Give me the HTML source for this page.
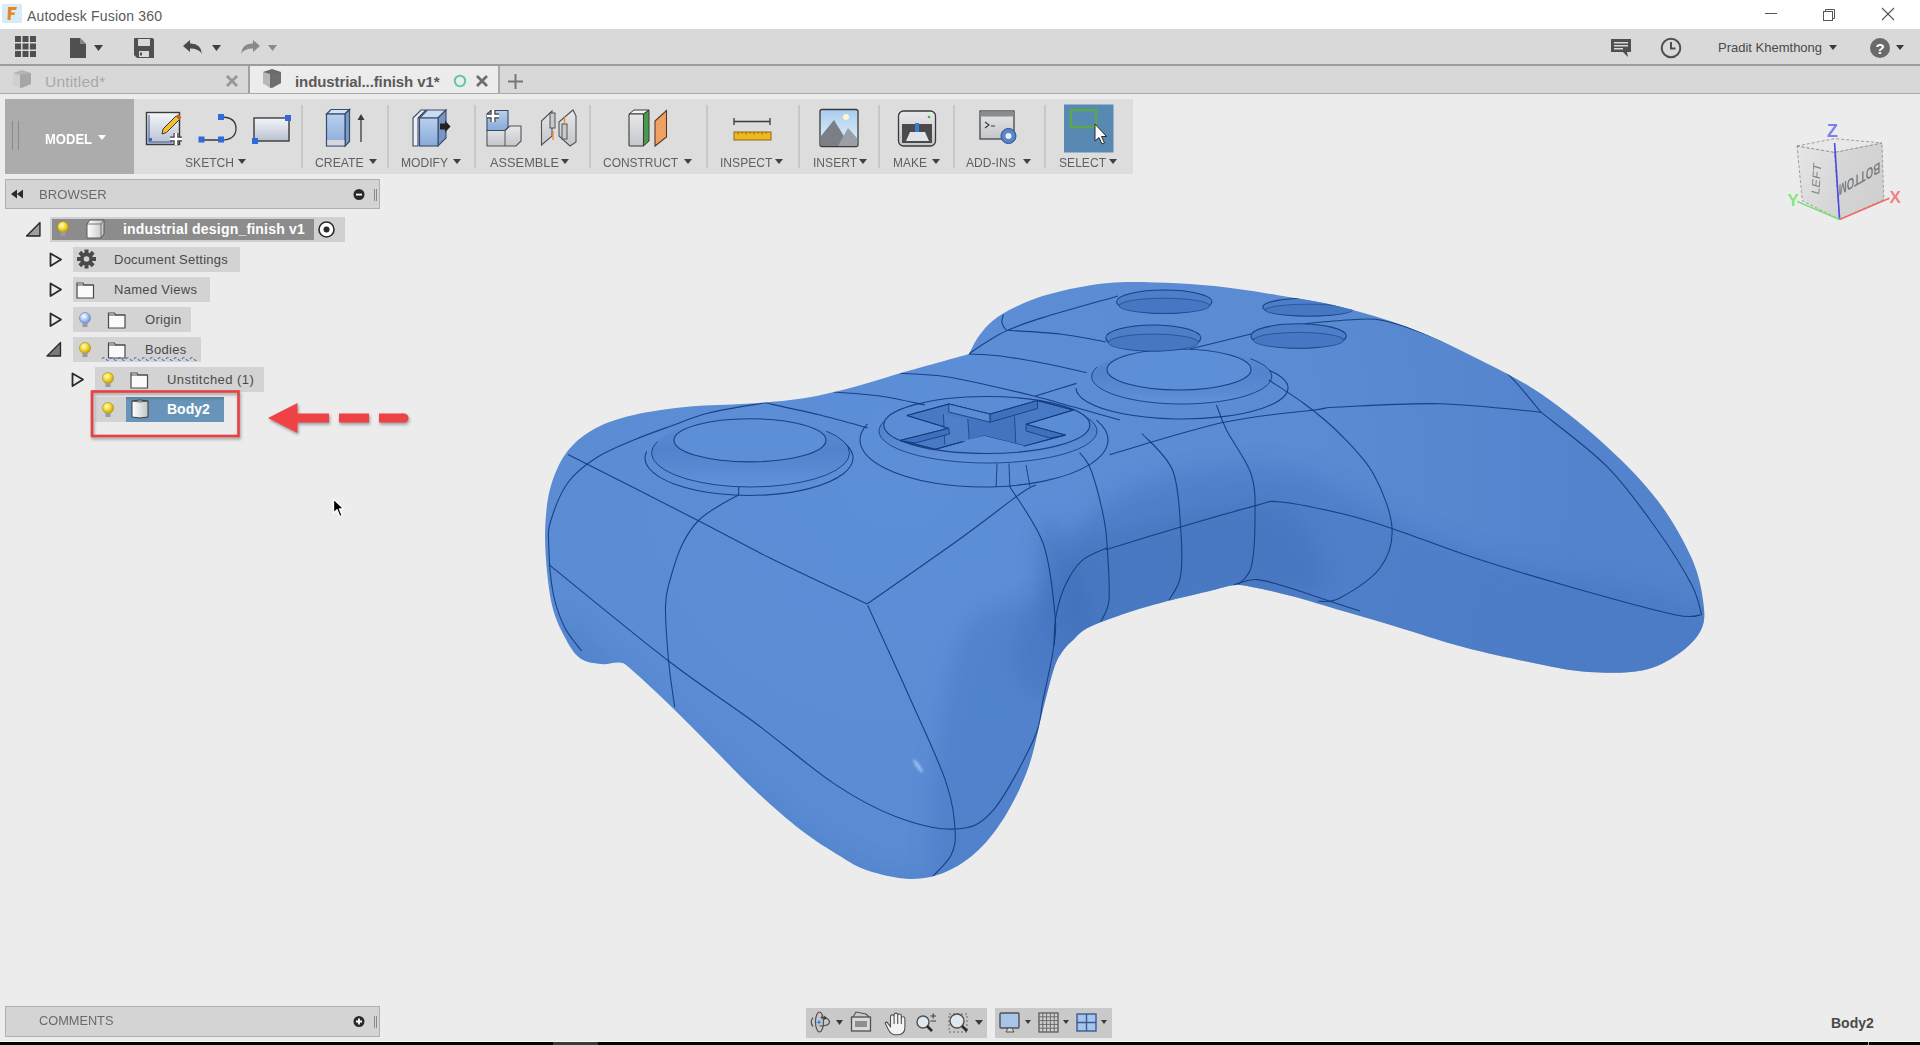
<!DOCTYPE html>
<html><head><meta charset="utf-8">
<style>
*{margin:0;padding:0;box-sizing:border-box}
html,body{width:1920px;height:1045px;overflow:hidden;background:#ececec;font-family:"Liberation Sans",sans-serif;position:relative}
.a{position:absolute}
.t{position:absolute;white-space:nowrap;line-height:1}
.lbl{position:absolute;white-space:nowrap;line-height:1;font-size:13px;color:#606060;transform-origin:0 0}
.tri{position:absolute;width:0;height:0;border-left:4px solid transparent;border-right:4px solid transparent;border-top:5px solid #404040}
.row{position:absolute;height:25px;background:#d3d3d3}
.rt{position:absolute;white-space:nowrap;line-height:1;font-size:13px;color:#4a4a4a;top:6px;letter-spacing:0.3px}
</style></head><body>
<!-- ===== title bar ===== -->
<div class="a" style="left:0;top:0;width:1920px;height:29px;background:#fff"></div>
<svg class="a" style="left:2px;top:4px" width="22" height="20" viewBox="0 0 22 20">
<rect x="0" y="0" width="20" height="19" fill="#d8ecf8"/>
<path d="M6 3 L15 3 L14 6 L9.5 6 L9.3 8.5 L13 8.5 L12.5 11 L9 11 L8.5 16 L5.5 16 Z" fill="#e8862a"/>
</svg>
<div class="t" style="left:27px;top:8.5px;font-size:14px;color:#5a5a5a;letter-spacing:0.2px">Autodesk Fusion 360</div>
<div class="a" style="left:1765px;top:13px;width:12px;height:1px;background:#555"></div>
<svg class="a" style="left:1820px;top:6px" width="16" height="16" viewBox="0 0 16 16">
<rect x="3.5" y="5.5" width="9" height="9" fill="none" stroke="#555" stroke-width="1"/>
<path d="M5.5 5.5 V3.5 H14.5 V12.5 H12.5" fill="none" stroke="#555" stroke-width="1"/>
</svg>
<svg class="a" style="left:1881px;top:7px" width="14" height="14" viewBox="0 0 14 14">
<path d="M1 1 L13 13 M13 1 L1 13" stroke="#555" stroke-width="1.1"/>
</svg>
<!-- ===== toolbar ===== -->
<div class="a" style="left:0;top:29px;width:1920px;height:35px;background:#d9d9d9"></div>
<div class="a" style="left:0;top:64px;width:1920px;height:2px;background:#9c9c9c"></div>
<svg class="a" style="left:14px;top:35px" width="24" height="24" viewBox="0 0 24 24" fill="#4f4f4f">
<rect x="1" y="1" width="6" height="6"/><rect x="8.5" y="1" width="6" height="6"/><rect x="16" y="1" width="6" height="6"/>
<rect x="1" y="8.5" width="6" height="6"/><rect x="8.5" y="8.5" width="6" height="6"/><rect x="16" y="8.5" width="6" height="6"/>
<rect x="1" y="16" width="6" height="6"/><rect x="8.5" y="16" width="6" height="6"/><rect x="16" y="16" width="6" height="6"/>
</svg>
<svg class="a" style="left:68px;top:36px" width="40" height="24" viewBox="0 0 40 24">
<path d="M2 2 H12 L18 8 V22 H2 Z" fill="#505050"/><path d="M12 2 V8 H18" fill="#888"/>
<path d="M26 9 H35 L30.5 15 Z" fill="#404040"/>
</svg>
<svg class="a" style="left:132px;top:36px" width="24" height="24" viewBox="0 0 24 24">
<path d="M2 3 Q2 2 3 2 H20 Q22 2 22 4 V22 H5 L2 19 Z" fill="#505050"/>
<rect x="6" y="3" width="12" height="7" fill="#d9d9d9"/>
<rect x="7" y="15" width="10" height="6" fill="#d9d9d9"/><rect x="8" y="16.5" width="2" height="3" fill="#505050"/>
</svg>
<svg class="a" style="left:181px;top:38px" width="46" height="20" viewBox="0 0 46 20">
<path d="M2 8 L9 2 V5.5 Q20 5 21 16 Q18 10.5 9 10.5 V14 Z" fill="#4a4a4a"/>
<path d="M31 7 H40 L35.5 13 Z" fill="#404040"/>
</svg>
<svg class="a" style="left:238px;top:38px" width="46" height="20" viewBox="0 0 46 20">
<path d="M22 8 L15 2 V5.5 Q4 5 3 16 Q6 10.5 15 10.5 V14 Z" fill="#8a8a8a"/>
<path d="M30 7 H39 L34.5 13 Z" fill="#8a8a8a"/>
</svg>
<!-- right toolbar -->
<svg class="a" style="left:1610px;top:38px" width="24" height="20" viewBox="0 0 24 20">
<path d="M1 1 H21 V14 H17 L18 19 L13 14 H1 Z" fill="#4f4f4f"/>
<rect x="4" y="4" width="14" height="1.5" fill="#d9d9d9"/><rect x="4" y="7" width="14" height="1.5" fill="#d9d9d9"/><rect x="4" y="10" width="9" height="1.5" fill="#d9d9d9"/>
</svg>
<svg class="a" style="left:1660px;top:37px" width="22" height="22" viewBox="0 0 22 22">
<circle cx="11" cy="11" r="9.3" fill="none" stroke="#4f4f4f" stroke-width="2"/>
<path d="M11 5 V11.5 H15.5" fill="none" stroke="#4f4f4f" stroke-width="2"/>
</svg>
<div class="t" style="left:1718px;top:41px;font-size:13px;color:#4a4a4a">Pradit Khemthong</div>
<div class="tri" style="left:1829px;top:45px;border-top-color:#3a3a3a"></div>
<svg class="a" style="left:1869px;top:37px" width="22" height="22" viewBox="0 0 22 22">
<circle cx="11" cy="11" r="10" fill="#6a6a6a"/>
<text x="11" y="16.5" font-family="Liberation Sans" font-weight="bold" font-size="15" fill="#fff" text-anchor="middle">?</text>
</svg>
<div class="tri" style="left:1896px;top:45px;border-top-color:#3a3a3a"></div>
<!-- ===== tab row ===== -->
<div class="a" style="left:0;top:66px;width:1920px;height:27px;background:#d8d8d8"></div>
<div class="a" style="left:0;top:93px;width:1920px;height:1px;background:#a8a8a8"></div>
<div class="a" style="left:248px;top:66px;width:2px;height:27px;background:#a0a0a0"></div>
<div class="a" style="left:250px;top:66px;width:248px;height:27px;background:#ececec"></div>
<div class="a" style="left:498px;top:66px;width:2px;height:27px;background:#a8a8a8"></div>
<svg class="a" style="left:11px;top:69px" width="22" height="20" viewBox="0 0 22 20">
<path d="M2 4 L11 1 L20 4 V15 L11 19 L2 15 Z" fill="#b4b4b4"/>
<path d="M2 4 L9 6 V19 L2 15 Z" fill="#d0d0d0"/><path d="M9 6 L20 4 V15 L9 19 Z" fill="#a6a6a6"/>
</svg>
<div class="t" style="left:45px;top:74px;font-size:15.5px;color:#a8a8a8;letter-spacing:0.2px">Untitled*</div>
<svg class="a" style="left:225px;top:74px" width="14" height="14" viewBox="0 0 14 14">
<path d="M2 2 L12 12 M12 2 L2 12" stroke="#969696" stroke-width="2.8"/>
</svg>
<svg class="a" style="left:261px;top:68px" width="22" height="21" viewBox="0 0 22 21">
<path d="M2 4 L11 1 L20 4 V15 L11 20 L2 15 Z" fill="#6a6a6a"/>
<path d="M2 4 L9 6 V20 L2 15 Z" fill="#b8b8b8"/><path d="M9 6 L20 4 V15 L9 20 Z" fill="#6e6e6e"/>
</svg>
<div class="t" style="left:295px;top:74px;font-size:15px;font-weight:bold;color:#5a5a5a;letter-spacing:-0.1px">industrial...finish v1*</div>
<svg class="a" style="left:452px;top:73px" width="16" height="16" viewBox="0 0 16 16">
<circle cx="8" cy="8" r="5.2" fill="none" stroke="#60c8a8" stroke-width="2"/>
</svg>
<svg class="a" style="left:475px;top:74px" width="14" height="14" viewBox="0 0 14 14">
<path d="M2 2 L12 12 M12 2 L2 12" stroke="#6e6e6e" stroke-width="2.8"/>
</svg>
<svg class="a" style="left:507px;top:73px" width="17" height="17" viewBox="0 0 17 17">
<path d="M8.5 1 V16 M1 8.5 H16" stroke="#777" stroke-width="2"/>
</svg>
<!-- ===== ribbon ===== -->
<div class="a" style="left:5px;top:99px;width:1128px;height:75px;background:#dddddd"></div>
<div class="a" style="left:5px;top:99px;width:129px;height:75px;background:#acacac"></div>
<div class="a" style="left:12px;top:121px;width:1px;height:29px;background:#8a8a8a"></div>
<div class="a" style="left:18px;top:121px;width:1px;height:29px;background:#8a8a8a"></div>
<div class="t" style="left:45px;top:132px;font-size:14px;font-weight:bold;color:#fff;transform:scaleX(0.93);transform-origin:0 0">MODEL</div>
<div class="tri" style="left:98px;top:135px;border-top-color:#fff;border-left-width:4px;border-right-width:4px;border-top-width:5px"></div>
<!-- separators -->
<div class="a" style="left:301px;top:105px;width:2px;height:63px;background:#c8c8c8"></div>
<div class="a" style="left:387px;top:105px;width:2px;height:63px;background:#c8c8c8"></div>
<div class="a" style="left:474px;top:105px;width:2px;height:63px;background:#c8c8c8"></div>
<div class="a" style="left:589px;top:105px;width:2px;height:63px;background:#c8c8c8"></div>
<div class="a" style="left:706px;top:105px;width:2px;height:63px;background:#c8c8c8"></div>
<div class="a" style="left:798px;top:105px;width:2px;height:63px;background:#c8c8c8"></div>
<div class="a" style="left:878px;top:105px;width:2px;height:63px;background:#c8c8c8"></div>
<div class="a" style="left:953px;top:105px;width:2px;height:63px;background:#c8c8c8"></div>
<div class="a" style="left:1044px;top:105px;width:2px;height:63px;background:#c8c8c8"></div>
<!-- labels -->
<div class="lbl" style="left:185px;top:156px;transform:scaleX(0.93)">SKETCH</div><div class="tri" style="left:238px;top:159px"></div>
<div class="lbl" style="left:315px;top:156px;transform:scaleX(0.94)">CREATE</div><div class="tri" style="left:369px;top:159px"></div>
<div class="lbl" style="left:401px;top:156px;transform:scaleX(0.93)">MODIFY</div><div class="tri" style="left:453px;top:159px"></div>
<div class="lbl" style="left:490px;top:156px;transform:scaleX(0.985)">ASSEMBLE</div><div class="tri" style="left:561px;top:159px"></div>
<div class="lbl" style="left:603px;top:156px;transform:scaleX(0.92)">CONSTRUCT</div><div class="tri" style="left:684px;top:159px"></div>
<div class="lbl" style="left:720px;top:156px;transform:scaleX(0.93)">INSPECT</div><div class="tri" style="left:775px;top:159px"></div>
<div class="lbl" style="left:813px;top:156px;transform:scaleX(0.93)">INSERT</div><div class="tri" style="left:859px;top:159px"></div>
<div class="lbl" style="left:893px;top:156px;transform:scaleX(0.92)">MAKE</div><div class="tri" style="left:932px;top:159px"></div>
<div class="lbl" style="left:966px;top:156px;transform:scaleX(0.93)">ADD-INS</div><div class="tri" style="left:1023px;top:159px"></div>
<div class="lbl" style="left:1059px;top:156px;transform:scaleX(0.93)">SELECT</div><div class="tri" style="left:1109px;top:159px"></div>
<!-- icons -->
<svg class="a" style="left:0;top:95px" width="1140" height="60" viewBox="0 95 1140 60">
<defs>
<linearGradient id="gPaper" x1="0" y1="0" x2="0" y2="1"><stop offset="0" stop-color="#f4f6fa"/><stop offset="1" stop-color="#b8c0d0"/></linearGradient>
<linearGradient id="gBlue" x1="0" y1="0" x2="0" y2="1"><stop offset="0" stop-color="#b8d0ee"/><stop offset="1" stop-color="#88aad8"/></linearGradient>
<linearGradient id="gGray" x1="0" y1="0" x2="0" y2="1"><stop offset="0" stop-color="#e8e8ea"/><stop offset="1" stop-color="#c4c6ca"/></linearGradient>
<linearGradient id="gSky" x1="0" y1="0" x2="0" y2="1"><stop offset="0" stop-color="#a8cdf0"/><stop offset="1" stop-color="#e8f2fa"/></linearGradient>
</defs>
<!-- sketch -->
<rect x="146.5" y="112.5" width="33" height="32" fill="url(#gPaper)" stroke="#3a3a3a" stroke-width="1.4"/>
<path d="M149 115 V142 H172" fill="none" stroke="#3a5a9a" stroke-width="1"/>
<rect x="149" y="138" width="3" height="3" fill="#2e6bd8"/>
<path d="M163 129 L176 116 L179.5 119.5 L166.5 132.5 L162 134 Z" fill="#f0c030" stroke="#3a3a3a" stroke-width="1"/>
<path d="M176 116 L178 114 L181.5 117.5 L179.5 119.5Z" fill="#c07030"/>
<path d="M170 139 H182 M176 133 V145" stroke="#3a3a3a" stroke-width="5"/>
<path d="M170 139 H182 M176 133 V145" stroke="#fff" stroke-width="2.6"/>
<!-- line arc -->
<path d="M202 140 H221 M221 117 Q236 117 236 128.5 Q236 140 221 140" fill="none" stroke="#3a3a3a" stroke-width="1.3"/>
<rect x="198.5" y="136.5" width="6" height="6" fill="#2e6bd8"/><rect x="218" y="136.5" width="6" height="6" fill="#2e6bd8"/><rect x="218" y="114" width="6" height="6" fill="#2e6bd8"/>
<!-- rectangle -->
<rect x="254" y="118" width="35" height="23" fill="url(#gPaper)" stroke="#3a3a3a" stroke-width="1.4"/>
<rect x="252" y="138" width="6" height="6" fill="#2e6bd8"/><rect x="285" y="115" width="6" height="6" fill="#2e6bd8"/>
<!-- create -->
<path d="M326.5 114 L331 109.5 H349.5 L345 114 Z" fill="#d0e2f4" stroke="#3a4a6a" stroke-width="1.2"/>
<path d="M345 114 L349.5 109.5 V141.5 L345 146 Z" fill="#7c9cc8" stroke="#3a4a6a" stroke-width="1.2"/>
<rect x="326.5" y="114" width="18.5" height="32" fill="url(#gBlue)" stroke="#3a4a6a" stroke-width="1.2"/>
<rect x="327.2" y="140" width="17.2" height="5.4" fill="#d4d8de"/>
<path d="M361 142 V116" stroke="#3a3a3a" stroke-width="1.3"/><path d="M357.5 120 L361 114 L364.5 120Z" fill="#3a3a3a"/>
<!-- modify -->
<path d="M413 118 L421 110 H426 L418 118 V146 H413 Z" fill="#eceef2" stroke="#3a4a6a" stroke-width="1.1"/>
<path d="M419.5 118 L427.5 110 H446 L438 118 Z" fill="#c8dcf2" stroke="#3a4a6a" stroke-width="1.1"/>
<path d="M438 118 L446 110 V138 L438 146 Z" fill="#7896c4" stroke="#3a4a6a" stroke-width="1.1"/>
<rect x="419.5" y="118" width="18.5" height="28" fill="url(#gBlue)" stroke="#3a4a6a" stroke-width="1.1"/>
<path d="M440 123.5 H445 V120.5 L450.5 126.5 L445 132.5 V129.5 H440 Z" fill="#222"/>
<!-- assemble 1 -->
<path d="M487 130.5 H505 L510 126 H521 V141 L516 146 H487 Z" fill="url(#gGray)" stroke="#505458" stroke-width="1.1"/>
<path d="M487 114 L491 110.5 H508 V127 L505 130.5 H487 Z" fill="url(#gBlue)" stroke="#3a4a6a" stroke-width="1.1"/>
<path d="M505 130.5 V146 M505 130.5 L510 126" fill="none" stroke="#505458" stroke-width="1"/>
<path d="M493 110 V122 M487 116 H499" stroke="#3a3a3a" stroke-width="5"/>
<path d="M493 110 V122 M487 116 H499" stroke="#fff" stroke-width="2.6"/>
<!-- assemble 2 -->
<path d="M541.5 121 L552 111 V136 L541.5 145 Z" fill="url(#gGray)" stroke="#505458" stroke-width="1.1"/>
<path d="M559 122 L573 110 L576 116 V142 L570 146 L559 136 Z" fill="url(#gGray)" stroke="#505458" stroke-width="1.1"/>
<rect x="550" y="113" width="5" height="15" fill="#c8cacc" stroke="#505458" stroke-width="1"/>
<rect x="562" y="124" width="5" height="15" fill="#c8cacc" stroke="#505458" stroke-width="1"/>
<path d="M553 131 V140 M564.5 116 V124" stroke="#f08020" stroke-width="1.2"/>
<!-- construct -->
<path d="M629 114 L634 110 H649 L643.5 114 Z" fill="#f4f4f4" stroke="#3a3a3a" stroke-width="1"/>
<rect x="629" y="114" width="14.5" height="32" rx="1" fill="url(#gGray)" stroke="#3a3a3a" stroke-width="1.1"/>
<path d="M643.5 114 L649 110 V141 L643.5 146 Z" fill="#4a9a4a" stroke="#3a3a3a" stroke-width="1"/>
<path d="M655 121 L666.5 110.5 V137 L655 146 Z" fill="#f0a060" stroke="#5a3a2a" stroke-width="1.1"/>
<!-- inspect -->
<path d="M734 121.5 H770 M734 118 V125 M770 118 V125" stroke="#3a3a3a" stroke-width="1.3"/>
<rect x="734" y="132" width="37" height="8" fill="#f0b820" stroke="#8a6a10" stroke-width="1"/>
<path d="M738 132 V135 M742 132 V134 M746 132 V135 M750 132 V134 M754 132 V135 M758 132 V134 M762 132 V135 M766 132 V134" stroke="#8a6a10" stroke-width="0.8"/>
<!-- insert -->
<rect x="820" y="109.5" width="38" height="37" rx="2" fill="url(#gSky)" stroke="#3a3a3a" stroke-width="1.3"/>
<circle cx="846" cy="117" r="3" fill="#fff6c8"/>
<path d="M821 146 V136 L834 120 L850 146 Z" fill="#7a7e86"/>
<path d="M838 146 L848 128 L857 138 V146 Z" fill="#9a9ea6"/>
<!-- make -->
<rect x="898.5" y="111" width="37" height="35" rx="5" fill="url(#gGray)" stroke="#3a3a3a" stroke-width="1.3"/>
<rect x="902" y="124" width="30" height="19" fill="#4a4a4a"/>
<path d="M906 141 L910 132 H925 L929 141 Z" fill="#e0e4ea"/>
<rect x="915" y="123" width="4" height="9" fill="#3a7ad8"/>
<circle cx="929" cy="117" r="1.3" fill="#30c030"/>
<!-- add-ins -->
<rect x="980" y="111" width="34" height="28" fill="url(#gGray)" stroke="#3a3a3a" stroke-width="1.2"/>
<rect x="980.5" y="111.5" width="33" height="5" fill="#8a8c90"/>
<path d="M985 122 L989 125 L985 128 M991 126 H995" fill="none" stroke="#3a3a3a" stroke-width="1.1"/>
<circle cx="1008.5" cy="136" r="7.5" fill="#5a86c8" stroke="#2a4a8a" stroke-width="1"/>
<circle cx="1008.5" cy="136" r="3" fill="#e8eef8"/>
<!-- select -->
<rect x="1064" y="104.5" width="49.5" height="48" fill="#5889b3"/>
<rect x="1071" y="110" width="25" height="17" fill="none" stroke="#5aa848" stroke-width="2.4"/>
<path d="M1095 124 V141 L1099 137.5 L1102 144 L1104.5 143 L1101.5 136.5 L1106.5 136.5 Z" fill="#fff" stroke="#2a2a2a" stroke-width="1"/>
</svg>

<!-- ===== browser ===== -->
<div class="a" style="left:5px;top:179px;width:375px;height:30px;background:#d4d4d4;border:1px solid #b0b0b0"></div>
<svg class="a" style="left:10px;top:188px" width="16" height="12" viewBox="0 0 16 12">
<path d="M1 6 L7 1.5 V10.5 Z M7 6 L13 1.5 V10.5 Z" fill="#2a2a2a"/>
</svg>
<div class="t" style="left:39px;top:187.5px;font-size:13.5px;color:#6a6a6a;transform:scaleX(0.97);transform-origin:0 0">BROWSER</div>
<svg class="a" style="left:352px;top:187px" width="28" height="16" viewBox="0 0 28 16">
<circle cx="7" cy="7.5" r="5.5" fill="#2a2a2a"/><rect x="4" y="6.7" width="6" height="1.8" fill="#fff"/>
<path d="M22.5 2 V14 M24.5 2 V14" stroke="#8a8a8a" stroke-width="1"/>
</svg>
<!-- root row -->
<svg class="a" style="left:24px;top:220px" width="18" height="18" viewBox="0 0 18 18">
<path d="M2.5 16 L16 2.5 V16 Z" fill="#7a7a7a" stroke="#2a2a2a" stroke-width="1.3" stroke-linejoin="round"/>
<path d="M5 15 L15 5 V15Z" fill="#d8d8d8" opacity="0.4"/>
</svg>
<div class="row" style="left:50px;top:217px;width:295px;background:#d0d0d0"></div>
<div class="a" style="left:52px;top:219px;width:262px;height:21px;background:#8c8c8c"></div>
<div class="t" style="left:123px;top:222px;font-size:14px;font-weight:bold;color:#fff;letter-spacing:0.2px">industrial design_finish v1</div>
<svg class="a" style="left:316px;top:219px" width="22" height="21" viewBox="0 0 22 21">
<circle cx="10.5" cy="10.5" r="7.5" fill="#fff" stroke="#2a2a2a" stroke-width="1.6"/>
<circle cx="10.5" cy="10.5" r="3" fill="#2a2a2a"/>
</svg>
<!-- rows -->
<div class="row" style="left:73px;top:247px;width:167px"></div>
<div class="row" style="left:73px;top:277px;width:137px"></div>
<div class="row" style="left:73px;top:307px;width:118px"></div>
<div class="row" style="left:73px;top:337px;width:128px"></div>
<div class="row" style="left:95px;top:367px;width:169px"></div>
<div class="row" style="left:95px;top:397px;width:31px"></div>
<div class="a" style="left:126px;top:397px;width:98px;height:25px;background:linear-gradient(#5a80a0,#6894b9 4px,#6894b9)"></div>
<div class="rt" style="left:114px;top:252.5px;letter-spacing:0.25px">Document Settings</div>
<div class="rt" style="left:114px;top:283px">Named Views</div>
<div class="rt" style="left:145px;top:313px">Origin</div>
<div class="rt" style="left:145px;top:343px">Bodies</div>
<div class="rt" style="left:167px;top:373px;letter-spacing:0.45px">Unstitched (1)</div>
<div class="t" style="left:167px;top:402px;font-size:14px;font-weight:bold;color:#fff">Body2</div>
<!-- expanders -->
<svg class="a" style="left:0;top:210px" width="420" height="240" viewBox="0 210 420 240">
<defs>
<radialGradient id="gBulb" cx="0.4" cy="0.35" r="0.6"><stop offset="0" stop-color="#fffbd0"/><stop offset="0.5" stop-color="#f6e040"/><stop offset="1" stop-color="#d0a810"/></radialGradient>
<radialGradient id="gBulbB" cx="0.4" cy="0.35" r="0.6"><stop offset="0" stop-color="#ffffff"/><stop offset="0.5" stop-color="#b8d0f8"/><stop offset="1" stop-color="#7898d8"/></radialGradient>
<linearGradient id="gCube" x1="0" y1="0" x2="1" y2="0"><stop offset="0" stop-color="#ffffff"/><stop offset="1" stop-color="#c0c4c8"/></linearGradient>
</defs>
<g fill="none" stroke="#2a2a2a" stroke-width="1.8" stroke-linejoin="round">
<path d="M50.5 253.5 L61 259.5 L50.5 266 Z"/>
<path d="M50.5 283.5 L61 289.5 L50.5 296 Z"/>
<path d="M50.5 313.5 L61 319.5 L50.5 326 Z"/>
<path d="M72.5 373.5 L83 379.5 L72.5 386 Z"/>
</g>
<path d="M47 356 L60.5 342.5 V356 Z" fill="#7a7a7a" stroke="#2a2a2a" stroke-width="1.3" stroke-linejoin="round"/>
<!-- bulbs -->
<g>
<circle cx="63" cy="227" r="5.5" fill="url(#gBulb)" stroke="#a08810" stroke-width="0.6"/><rect x="60.5" y="232" width="5" height="4" fill="#9a9aa0"/>
<circle cx="85" cy="318" r="5.5" fill="url(#gBulbB)" stroke="#6a7ab0" stroke-width="0.6"/><rect x="82.5" y="323" width="5" height="4" fill="#9a9aa0"/>
<circle cx="85" cy="348" r="5.5" fill="url(#gBulb)" stroke="#a08810" stroke-width="0.6"/><rect x="82.5" y="353" width="5" height="4" fill="#9a9aa0"/>
<circle cx="108" cy="378" r="5.5" fill="url(#gBulb)" stroke="#a08810" stroke-width="0.6"/><rect x="105.5" y="383" width="5" height="4" fill="#9a9aa0"/>
<circle cx="108" cy="408" r="5.5" fill="url(#gBulb)" stroke="#a08810" stroke-width="0.6"/><rect x="105.5" y="413" width="5" height="4" fill="#9a9aa0"/>
</g>
<!-- root cube -->
<path d="M87 224 L90 220 H104 V234 L101 238 H87 Z" fill="url(#gCube)" stroke="#5a5a5a" stroke-width="1"/>
<path d="M87 224 H101 V238 M101 224 L104 220" fill="none" stroke="#5a5a5a" stroke-width="0.8"/>
<!-- gear -->
<g transform="translate(86.5,259)">
<circle r="6.5" fill="#4a4a4a"/>
<g fill="#4a4a4a"><rect x="-2" y="-9.5" width="4" height="19"/><rect x="-9.5" y="-2" width="19" height="4"/>
<rect x="-2" y="-9.5" width="4" height="19" transform="rotate(45)"/><rect x="-2" y="-9.5" width="4" height="19" transform="rotate(-45)"/></g>
<circle r="2.8" fill="#d3d3d3"/>
</g>
<!-- folders -->
<g fill="#fafafa" stroke="#4a4a4a" stroke-width="1.2">
<path d="M77 283 H83 L84 285 H93.5 V298 H77 Z"/>
<path d="M108.5 313 H114.5 L115.5 315 H125 V328 H108.5 Z"/>
<path d="M108.5 343 H114.5 L115.5 345 H125 V358 H108.5 Z"/>
<path d="M131 373 H137 L138 375 H147.5 V388 H131 Z"/>
</g>
<path d="M77 285 H93.5 M108.5 315 H125 M108.5 345 H125 M131 375 H147.5" stroke="#4a4a4a" stroke-width="1"/>
<!-- squiggle under bodies -->
<path d="M102 359 Q104 356 106 359 T110 359 T114 359 T118 359 T122 359 T126 359 T130 359 T134 359 T138 359 T142 359 T146 359 T150 359 T154 359 T158 359 T162 359 T166 359 T170 359 T174 359 T178 359 T182 359 T186 359 T190 359 T194 359 T198 359" fill="none" stroke="#4a6ab8" stroke-width="1.2" stroke-dasharray="3 2"/>
<!-- body cube -->
<path d="M132 401 Q140 399 148 401 V417 Q140 419 132 417 Z" fill="url(#gCube)" stroke="#3a3a3a" stroke-width="1"/>
<path d="M132 401 Q140 403 148 401" fill="none" stroke="#3a3a3a" stroke-width="0.8"/>
<!-- red annotation -->
<g style="filter:drop-shadow(1px 2px 1.5px rgba(0,0,0,0.35))">
<rect x="92" y="391.5" width="146.5" height="44.5" fill="none" stroke="#e84042" stroke-width="2.6"/>
<path d="M268 418 L297.5 403 V433 Z" fill="#ee4244"/>
<path d="M297 418 H329 M339 418 H369 M379 418 H404" stroke="#ee4244" stroke-width="9"/>
<circle cx="404" cy="418" r="4.5" fill="#ee4244"/>
</g>
</svg>

<svg class="a" style="left:0;top:0" width="1920" height="1045" viewBox="0 0 1920 1045">
<defs>
<radialGradient id="gTop" cx="900" cy="470" r="700" gradientUnits="userSpaceOnUse">
<stop offset="0" stop-color="#5d8fd8"/><stop offset="0.6" stop-color="#5a8bd3"/><stop offset="1" stop-color="#5283cc"/></radialGradient>
<linearGradient id="gCap" x1="0" y1="0" x2="0" y2="1"><stop offset="0" stop-color="#5a8bd4"/><stop offset="0.45" stop-color="#5283cd"/><stop offset="0.8" stop-color="#5a8bd4"/><stop offset="1" stop-color="#6192da"/></linearGradient>
<filter id="blur8" x="-60%" y="-60%" width="220%" height="220%"><feGaussianBlur stdDeviation="10"/></filter>
<filter id="blur4"><feGaussianBlur stdDeviation="4"/></filter>
<filter id="blur1" x="-2" y="-2" width="5" height="5"><feGaussianBlur stdDeviation="1.2"/></filter>
<clipPath id="cOut"><path d="M968.9,354.0 C970.6,351.0 974.8,341.6 978.9,336.0 C983.0,330.4 987.3,325.0 993.3,320.2 C999.3,315.4 1006.4,311.4 1014.8,307.3 C1023.2,303.2 1032.7,299.2 1043.5,295.8 C1054.3,292.4 1066.7,289.5 1079.4,287.2 C1092.2,284.9 1103.8,282.8 1120.0,282.2 C1136.2,281.6 1158.9,282.4 1176.7,283.3 C1194.5,284.2 1210.0,285.6 1226.7,287.5 C1243.4,289.4 1257.8,291.8 1276.7,295.0 C1295.6,298.2 1318.3,301.4 1340.0,306.7 C1361.7,312.0 1384.7,318.4 1407.0,326.8 C1429.3,335.2 1451.7,345.8 1474.0,357.0 C1496.3,368.2 1518.7,378.7 1541.0,393.8 C1563.3,408.9 1588.3,429.5 1607.8,447.4 C1627.3,465.3 1644.0,482.6 1658.0,501.0 C1672.0,519.4 1684.0,541.1 1691.5,557.8 C1699.0,574.5 1701.6,589.4 1703.2,601.4 C1704.8,613.4 1705.3,621.1 1701.0,630.0 C1696.7,638.9 1687.3,647.9 1677.5,654.6 C1667.7,661.4 1656.8,667.6 1642.0,670.5 C1627.2,673.4 1606.7,673.2 1589.0,672.0 C1571.3,670.8 1556.7,667.5 1536.0,663.4 C1515.3,659.3 1488.7,653.7 1465.0,647.5 C1441.3,641.3 1414.3,632.1 1394.0,626.0 C1373.7,619.9 1359.7,615.9 1343.0,611.0 C1326.3,606.1 1308.1,600.3 1293.6,596.4 C1279.1,592.5 1265.6,589.6 1256.0,587.7 C1246.4,585.8 1243.4,584.5 1236.0,585.0 C1228.6,585.5 1226.4,586.8 1211.5,590.4 C1196.6,594.0 1166.5,600.7 1146.4,606.7 C1126.3,612.7 1103.2,620.7 1091.0,626.2 C1078.8,631.8 1077.8,635.7 1073.0,640.0 C1068.2,644.3 1065.2,647.1 1062.0,652.0 C1058.8,656.9 1056.8,659.6 1053.6,669.4 C1050.4,679.2 1046.8,694.8 1042.6,711.0 C1038.4,727.2 1034.7,749.4 1028.7,766.5 C1022.7,783.6 1014.8,799.8 1006.5,813.7 C998.2,827.6 988.9,840.0 978.7,849.7 C968.5,859.4 957.0,867.1 945.4,872.0 C933.8,876.9 922.3,879.1 909.4,878.9 C896.5,878.6 879.3,874.3 867.7,870.5 C856.1,866.7 851.2,862.9 840.0,856.0 C828.8,849.1 814.6,840.5 800.3,829.4 C786.0,818.3 769.1,803.4 754.3,789.6 C739.5,775.8 725.3,760.6 711.5,746.8 C697.7,733.0 685.0,719.8 671.7,707.0 C658.4,694.2 640.6,677.4 631.9,670.0 C623.2,662.6 624.7,663.6 619.6,662.6 C614.5,661.6 607.8,664.8 601.2,664.0 C594.6,663.2 585.9,662.6 579.8,658.0 C573.7,653.4 569.1,645.2 564.5,636.5 C559.9,627.8 555.3,618.8 552.2,606.0 C549.1,593.2 547.1,574.3 546.0,560.0 C544.9,545.7 544.7,532.6 545.6,520.0 C546.5,507.4 547.6,496.0 551.3,484.4 C555.0,472.8 560.5,460.0 568.0,450.6 C575.5,441.2 585.0,433.9 596.0,428.0 C607.0,422.1 618.1,418.6 633.8,415.0 C649.5,411.4 671.3,408.5 690.0,406.6 C708.7,404.7 727.3,405.1 746.0,403.8 C764.7,402.4 784.0,401.4 802.0,398.6 C820.0,395.8 837.7,391.2 854.0,387.0 C870.3,382.8 886.4,377.2 900.0,373.3 C913.6,369.4 924.4,366.5 935.9,363.3 C947.4,360.1 963.4,355.6 968.9,354.0Z"/></clipPath>
</defs>
<path d="M968.9,354.0 C970.6,351.0 974.8,341.6 978.9,336.0 C983.0,330.4 987.3,325.0 993.3,320.2 C999.3,315.4 1006.4,311.4 1014.8,307.3 C1023.2,303.2 1032.7,299.2 1043.5,295.8 C1054.3,292.4 1066.7,289.5 1079.4,287.2 C1092.2,284.9 1103.8,282.8 1120.0,282.2 C1136.2,281.6 1158.9,282.4 1176.7,283.3 C1194.5,284.2 1210.0,285.6 1226.7,287.5 C1243.4,289.4 1257.8,291.8 1276.7,295.0 C1295.6,298.2 1318.3,301.4 1340.0,306.7 C1361.7,312.0 1384.7,318.4 1407.0,326.8 C1429.3,335.2 1451.7,345.8 1474.0,357.0 C1496.3,368.2 1518.7,378.7 1541.0,393.8 C1563.3,408.9 1588.3,429.5 1607.8,447.4 C1627.3,465.3 1644.0,482.6 1658.0,501.0 C1672.0,519.4 1684.0,541.1 1691.5,557.8 C1699.0,574.5 1701.6,589.4 1703.2,601.4 C1704.8,613.4 1705.3,621.1 1701.0,630.0 C1696.7,638.9 1687.3,647.9 1677.5,654.6 C1667.7,661.4 1656.8,667.6 1642.0,670.5 C1627.2,673.4 1606.7,673.2 1589.0,672.0 C1571.3,670.8 1556.7,667.5 1536.0,663.4 C1515.3,659.3 1488.7,653.7 1465.0,647.5 C1441.3,641.3 1414.3,632.1 1394.0,626.0 C1373.7,619.9 1359.7,615.9 1343.0,611.0 C1326.3,606.1 1308.1,600.3 1293.6,596.4 C1279.1,592.5 1265.6,589.6 1256.0,587.7 C1246.4,585.8 1243.4,584.5 1236.0,585.0 C1228.6,585.5 1226.4,586.8 1211.5,590.4 C1196.6,594.0 1166.5,600.7 1146.4,606.7 C1126.3,612.7 1103.2,620.7 1091.0,626.2 C1078.8,631.8 1077.8,635.7 1073.0,640.0 C1068.2,644.3 1065.2,647.1 1062.0,652.0 C1058.8,656.9 1056.8,659.6 1053.6,669.4 C1050.4,679.2 1046.8,694.8 1042.6,711.0 C1038.4,727.2 1034.7,749.4 1028.7,766.5 C1022.7,783.6 1014.8,799.8 1006.5,813.7 C998.2,827.6 988.9,840.0 978.7,849.7 C968.5,859.4 957.0,867.1 945.4,872.0 C933.8,876.9 922.3,879.1 909.4,878.9 C896.5,878.6 879.3,874.3 867.7,870.5 C856.1,866.7 851.2,862.9 840.0,856.0 C828.8,849.1 814.6,840.5 800.3,829.4 C786.0,818.3 769.1,803.4 754.3,789.6 C739.5,775.8 725.3,760.6 711.5,746.8 C697.7,733.0 685.0,719.8 671.7,707.0 C658.4,694.2 640.6,677.4 631.9,670.0 C623.2,662.6 624.7,663.6 619.6,662.6 C614.5,661.6 607.8,664.8 601.2,664.0 C594.6,663.2 585.9,662.6 579.8,658.0 C573.7,653.4 569.1,645.2 564.5,636.5 C559.9,627.8 555.3,618.8 552.2,606.0 C549.1,593.2 547.1,574.3 546.0,560.0 C544.9,545.7 544.7,532.6 545.6,520.0 C546.5,507.4 547.6,496.0 551.3,484.4 C555.0,472.8 560.5,460.0 568.0,450.6 C575.5,441.2 585.0,433.9 596.0,428.0 C607.0,422.1 618.1,418.6 633.8,415.0 C649.5,411.4 671.3,408.5 690.0,406.6 C708.7,404.7 727.3,405.1 746.0,403.8 C764.7,402.4 784.0,401.4 802.0,398.6 C820.0,395.8 837.7,391.2 854.0,387.0 C870.3,382.8 886.4,377.2 900.0,373.3 C913.6,369.4 924.4,366.5 935.9,363.3 C947.4,360.1 963.4,355.6 968.9,354.0Z" fill="url(#gTop)"/>
<g clip-path="url(#cOut)">
<path d="M1060.0,560.0 C1068.3,526.7 1086.7,515.0 1110.0,500.0 C1133.3,485.0 1168.3,475.0 1200.0,470.0 C1231.7,465.0 1266.7,461.7 1300.0,470.0 C1333.3,478.3 1366.7,505.0 1400.0,520.0 C1433.3,535.0 1450.0,545.0 1500.0,560.0 C1550.0,575.0 1666.7,586.7 1700.0,610.0 C1733.3,633.3 1806.7,685.0 1700.0,700.0 C1593.3,715.0 1166.7,723.3 1060.0,700.0 C953.3,676.7 1051.7,593.3 1060.0,560.0Z" fill="#4677c2" opacity="0.55" filter="url(#blur8)"/>
<path d="M1070.0,560.0 C1076.7,541.7 1090.0,539.2 1120.0,530.0 C1150.0,520.8 1220.0,506.7 1250.0,505.0 C1280.0,503.3 1288.3,505.8 1300.0,520.0 C1311.7,534.2 1336.7,576.7 1320.0,590.0 C1303.3,603.3 1240.0,591.7 1200.0,600.0 C1160.0,608.3 1101.7,646.7 1080.0,640.0 C1058.3,633.3 1063.3,578.3 1070.0,560.0Z" fill="#3f70b8" opacity="0.45" filter="url(#blur8)"/>
<path d="M1045.0,520.0 C1050.8,513.3 1067.5,543.3 1075.0,560.0 C1082.5,576.7 1092.5,603.3 1090.0,620.0 C1087.5,636.7 1068.3,663.3 1060.0,660.0 C1051.7,656.7 1042.5,623.3 1040.0,600.0 C1037.5,576.7 1039.2,526.7 1045.0,520.0Z" fill="#3d6eb8" opacity="0.5" filter="url(#blur8)"/>
<path d="M960.0,640.0 C978.3,596.7 1020.0,600.0 1040.0,600.0 C1060.0,600.0 1080.0,606.7 1080.0,640.0 C1080.0,673.3 1056.7,760.0 1040.0,800.0 C1023.3,840.0 998.3,870.0 980.0,880.0 C961.7,890.0 933.3,900.0 930.0,860.0 C926.7,820.0 941.7,683.3 960.0,640.0Z" fill="#4677c2" opacity="0.45" filter="url(#blur8)"/>
<path d="M560.0,620.0 C570.0,616.7 606.7,651.7 640.0,680.0 C673.3,708.3 723.3,760.0 760.0,790.0 C796.7,820.0 830.0,845.0 860.0,860.0 C890.0,875.0 933.3,873.3 940.0,880.0 C946.7,886.7 940.0,913.3 900.0,900.0 C860.0,886.7 753.3,833.3 700.0,800.0 C646.7,766.7 603.3,730.0 580.0,700.0 C556.7,670.0 550.0,623.3 560.0,620.0Z" fill="#4a7bc4" opacity="0.4" filter="url(#blur8)"/>
<ellipse cx="918" cy="766" rx="2" ry="8" transform="rotate(-35 918 766)" fill="#a8c8f8" opacity="0.8" filter="url(#blur1)"/>
<path d="M867.5,423.9 A124.0,47.0 0 1 0 1096.4,420.1" fill="none" stroke="#12397a" stroke-width="1.1" stroke-opacity="0.9"/>
<ellipse cx="988.0" cy="431.0" rx="109.0" ry="32.0" fill="url(#gCap)" stroke="#12397a" stroke-width="1" stroke-opacity="0.8"/>
<ellipse cx="986.8" cy="425.0" rx="103.0" ry="28.5" fill="#5b8dd6" stroke="#12397a" stroke-width="1.1" stroke-opacity="0.9"/>
<path d="M906.9,415.5 L948.8,404.0 L990.1,414.1 L1037.5,400.6 L1073.4,410.0 L1026.0,424.3 L1065.3,435.1 L1024.7,445.9 L984.0,435.8 L935.3,449.3 L900.1,440.5 L948.8,428.3Z" fill="#4779c4" stroke="#12397a" stroke-width="1" stroke-opacity="0.9"/>
<path d="M943.4,414.0 L967.8,418.9 L969.2,439.2 L944.8,444.6Z" fill="#4e80ca" stroke="none"/>
<path d="M967.8,418.9 L990.1,422.2 L1014.5,416.1 L1015.9,446.0 L984.0,435.8 L969.2,439.2Z" fill="#4374c0" stroke="none"/>
<path d="M1014.5,416.1 L1026.0,424.3 L1026.0,431.0 L1050.0,438.0 L1024.7,445.9 L1015.9,446.0Z" fill="#4a7bc6" stroke="none"/>
<path d="M943.4,414 L944.8,444.6 M967.8,418.9 L969.2,439.2" fill="none" stroke="#12397a" stroke-width="0.9" stroke-opacity="0.8"/>
<path d="M1014.5,416.1 L1015.9,446" fill="none" stroke="#12397a" stroke-width="0.9" stroke-opacity="0.8"/>
<path d="M906.9,415.5 L948.8,404.0 L990.1,414.1 L1037.5,400.6 L1073.4,410.0 L1026.0,424.3 L1065.3,435.1 L1024.7,445.9 L984.0,435.8 L935.3,449.3 L900.1,440.5 L948.8,428.3Z" fill="none" stroke="#12397a" stroke-width="1" stroke-opacity="0.9"/>
<path d="M948.8,404.0 L990.1,414.1 L990.1,422.2 L948.8,412.0Z" fill="#5a8bd3" stroke="#12397a" stroke-width="0.8"/>
<path d="M990.1,414.1 L1037.5,400.6 L1037.5,408.5 L990.1,422.2Z" fill="#3f6fbd" stroke="#12397a" stroke-width="0.8"/>
<path d="M900.1,440.5 L948.8,428.3 L949.5,434.0 L915.0,443.0Z" fill="#3f6fbd" stroke="#12397a" stroke-width="0.8"/>
<path d="M1026.0,424.3 L1026.0,431.0 L1050.0,438.0 L1065.3,435.1Z" fill="#3f6fbd" stroke="#12397a" stroke-width="0.8"/>
<path d="M984.0,435.8 L1024.7,445.9 L1003.0,451.0 L962.0,441.0Z" fill="#5b8dd6" stroke="none"/>
<path d="M646.6,451.5 A104.0,37.5 0 1 0 839.1,439.2" fill="none" stroke="#12397a" stroke-width="1.1" stroke-opacity="0.9"/>
<ellipse cx="750.5" cy="453.0" rx="99.0" ry="34.0" fill="url(#gCap)" stroke="none"/>
<path d="M657.5,441.4 A99.0,34.0 0 1 0 826.3,431.1" fill="none" stroke="#12397a" stroke-width="1" stroke-opacity="0.85"/>
<ellipse cx="750.0" cy="440.3" rx="76.0" ry="21.6" fill="#5d8fd8" stroke="#12397a" stroke-width="1.1" stroke-opacity="0.9"/>
<path d="M1076.0,388.0 A106.0,31.0 0 1 0 1257.0,366.1" fill="none" stroke="#12397a" stroke-width="1.1" stroke-opacity="0.9"/>
<ellipse cx="1181.7" cy="376.5" rx="90.0" ry="27.5" fill="url(#gCap)" stroke="none"/>
<path d="M1097.1,367.1 A90.0,27.5 0 1 0 1250.6,358.8" fill="none" stroke="#12397a" stroke-width="1" stroke-opacity="0.85"/>
<ellipse cx="1179.0" cy="369.5" rx="72.0" ry="20.5" fill="#5d8fd8" stroke="#12397a" stroke-width="1.1" stroke-opacity="0.9"/>
<ellipse cx="1164.3" cy="301.7" rx="47.7" ry="11.7" fill="#4d7ec9" stroke="#12397a" stroke-width="1.1" stroke-opacity="0.9"/>
<ellipse cx="1164.3" cy="305.8" rx="45.3" ry="7.6" fill="#4677c2" stroke="#12397a" stroke-width="0.8" stroke-opacity="0.7"/>
<ellipse cx="1308.8" cy="307.0" rx="46.0" ry="9.0" fill="#4d7ec9" stroke="#12397a" stroke-width="1.1" stroke-opacity="0.9"/>
<ellipse cx="1308.8" cy="310.1" rx="43.7" ry="5.9" fill="#4677c2" stroke="#12397a" stroke-width="0.8" stroke-opacity="0.7"/>
<ellipse cx="1153.3" cy="338.0" rx="47.5" ry="13.0" fill="#4d7ec9" stroke="#12397a" stroke-width="1.1" stroke-opacity="0.9"/>
<ellipse cx="1153.3" cy="342.6" rx="45.1" ry="8.5" fill="#4677c2" stroke="#12397a" stroke-width="0.8" stroke-opacity="0.7"/>
<ellipse cx="1298.6" cy="336.0" rx="47.7" ry="12.2" fill="#4d7ec9" stroke="#12397a" stroke-width="1.1" stroke-opacity="0.9"/>
<ellipse cx="1298.6" cy="340.3" rx="45.3" ry="7.9" fill="#4677c2" stroke="#12397a" stroke-width="0.8" stroke-opacity="0.7"/>
<path d="M549.0,564.6 C568.9,580.7 634.4,634.7 668.6,661.0 C702.8,687.3 726.7,701.9 754.3,722.3 C781.9,742.7 810.5,767.9 834.0,783.6 C857.5,799.3 875.3,808.8 895.5,816.4 C915.7,824.0 938.8,829.9 955.0,829.0 C971.2,828.1 979.4,825.9 992.6,810.9 C1005.8,795.9 1025.6,757.2 1034.0,738.7 C1042.4,720.2 1039.7,715.6 1043.0,700.0 C1046.3,684.4 1052.1,660.0 1054.0,645.0 C1055.9,630.0 1056.3,627.0 1054.5,610.0 C1052.7,593.0 1050.5,563.6 1043.0,543.0 C1035.5,522.4 1015.1,495.8 1009.5,486.3" fill="none" stroke="#12397a" stroke-width="1.1" stroke-opacity="0.9"/>
<path d="M568.0,454.4 C589.8,465.5 665.3,503.7 699.0,521.0 C732.7,538.3 742.0,544.2 770.0,558.0 C798.0,571.8 850.8,596.3 867.0,604.0" fill="none" stroke="#12397a" stroke-width="1.1" stroke-opacity="0.9"/>
<path d="M867.0,604.0 C882.0,593.5 931.5,559.3 957.0,541.0 C982.5,522.7 1006.8,503.3 1020.0,494.0 C1033.2,484.7 1033.3,486.5 1036.0,485.0" fill="none" stroke="#12397a" stroke-width="1.1" stroke-opacity="0.9"/>
<path d="M867.7,605.5 C874.7,620.8 896.5,667.9 909.4,697.0 C922.3,726.1 937.8,758.4 945.4,780.4 C953.0,802.4 954.1,816.5 955.0,829.0 C955.9,841.5 954.9,847.2 951.0,855.3 C947.1,863.4 934.8,873.8 931.6,877.5" fill="none" stroke="#12397a" stroke-width="1.1" stroke-opacity="0.9"/>
<path d="M738.75,487 L738.5,495" fill="none" stroke="#12397a" stroke-width="1.1" stroke-opacity="0.9"/>
<path d="M738.5,495.0 C735.8,496.5 728.6,499.8 722.0,504.0 C715.4,508.2 705.7,513.2 699.0,520.0 C692.3,526.8 686.8,535.0 682.0,545.0 C677.2,555.0 672.8,569.8 670.0,580.0 C667.2,590.2 665.7,592.5 665.5,606.0 C665.3,619.5 667.1,644.2 668.6,661.0 C670.1,677.8 673.7,699.3 674.7,707.0" fill="none" stroke="#12397a" stroke-width="1.1" stroke-opacity="0.9"/>
<path d="M765.0,402.8 C755.6,404.5 724.4,409.1 708.8,413.0 C693.1,416.9 683.5,421.5 671.0,426.0 C658.5,430.5 646.2,434.7 633.8,440.0 C621.2,445.3 607.0,450.9 596.0,458.0 C585.0,465.1 575.5,472.2 568.0,482.5 C560.5,492.8 554.2,509.6 551.0,520.0 C547.8,530.4 548.4,532.9 548.7,545.0 C549.0,557.1 550.4,578.8 553.0,592.5 C555.6,606.2 559.7,617.2 564.5,627.0 C569.3,636.8 578.8,647.0 581.7,651.0" fill="none" stroke="#12397a" stroke-width="1.1" stroke-opacity="0.9"/>
<path d="M765.0,402.8 C774.2,404.8 802.8,410.8 820.0,415.0 C837.2,419.2 860.0,425.8 868.0,428.0" fill="none" stroke="#12397a" stroke-width="1.1" stroke-opacity="0.9"/>
<path d="M900.0,373.3 C907.2,373.8 928.7,374.3 943.0,376.2 C957.3,378.1 970.7,381.4 986.0,384.8 C1001.3,388.2 1019.8,392.5 1034.9,396.3 C1050.0,400.1 1062.3,403.9 1076.5,407.8 C1090.7,411.8 1112.8,418.0 1120.0,420.0" fill="none" stroke="#12397a" stroke-width="1.1" stroke-opacity="0.9"/>
<path d="M968.9,354.0 C974.2,354.3 988.1,354.4 1000.5,356.0 C1012.9,357.6 1029.2,360.5 1043.5,363.3 C1057.8,366.1 1079.4,371.1 1086.6,372.6" fill="none" stroke="#12397a" stroke-width="1.1" stroke-opacity="0.9"/>
<path d="M968.9,354.0 C971.6,352.2 978.5,346.9 985.0,343.0 C991.5,339.1 997.9,334.6 1007.6,330.3 C1017.4,326.0 1025.1,323.1 1043.5,317.4 C1061.9,311.7 1105.6,299.6 1118.0,296.0" fill="none" stroke="#12397a" stroke-width="1.1" stroke-opacity="0.9"/>
<path d="M1007.6,330.3 C1016.3,330.9 1043.7,332.1 1060.0,334.0 C1076.3,335.9 1098.0,340.5 1105.6,341.8" fill="none" stroke="#12397a" stroke-width="1.1" stroke-opacity="0.9"/>
<path d="M1003.3,314.5 C1003.1,315.9 1001.5,320.4 1002.0,323.0 C1002.5,325.6 1005.5,329.1 1006.2,330.3" fill="none" stroke="#12397a" stroke-width="1.1" stroke-opacity="0.9"/>
<path d="M1034.9,396.3 C1041.8,394.1 1069.6,385.5 1076.5,383.4" fill="none" stroke="#12397a" stroke-width="1.1" stroke-opacity="0.9"/>
<path d="M833.5,392.0 C841.2,392.7 864.8,393.8 880.0,396.0 C895.2,398.2 917.5,403.5 925.0,405.0" fill="none" stroke="#12397a" stroke-width="1.1" stroke-opacity="0.9"/>
<path d="M997.0,463.5 C996.9,467.4 996.3,482.8 996.2,486.6" fill="none" stroke="#12397a" stroke-width="1" stroke-opacity="0.9"/>
<path d="M1009.0,463.5 C1009.1,467.4 1009.7,482.8 1009.8,486.6" fill="none" stroke="#12397a" stroke-width="1" stroke-opacity="0.9"/>
<path d="M1026.0,465.0 C1026.7,468.6 1029.3,483.0 1030.0,486.6" fill="none" stroke="#12397a" stroke-width="1" stroke-opacity="0.9"/>
<path d="M1105.8,549.7 C1118.3,545.9 1155.6,534.4 1180.6,527.0 C1205.6,519.6 1239.3,509.8 1256.0,505.6 C1272.7,501.4 1266.4,500.6 1281.0,502.0 C1295.6,503.4 1324.9,509.6 1343.4,514.0 C1361.9,518.4 1370.2,521.1 1392.0,528.4 C1413.8,535.7 1443.7,547.9 1474.0,557.8 C1504.3,567.7 1540.5,578.5 1574.0,588.0 C1607.5,597.5 1653.5,610.2 1674.8,614.7 C1696.1,619.2 1697.1,614.7 1701.6,614.7" fill="none" stroke="#12397a" stroke-width="1.1" stroke-opacity="0.9"/>
<path d="M1109.6,454.6 C1128.7,449.2 1190.0,429.7 1224.0,422.3 C1258.0,414.9 1294.2,412.6 1313.5,410.0 C1332.8,407.4 1318.8,408.0 1340.0,407.0 C1361.2,406.0 1406.9,402.9 1440.4,403.8 C1473.9,404.7 1524.2,410.8 1541.0,412.2" fill="none" stroke="#12397a" stroke-width="1.1" stroke-opacity="0.9"/>
<path d="M1541.0,412.2 C1552.1,421.4 1588.3,447.6 1607.8,467.4 C1627.3,487.2 1644.0,511.5 1658.0,531.0 C1672.0,550.5 1684.2,570.6 1691.5,584.6 C1698.8,598.6 1699.9,609.7 1701.6,614.7" fill="none" stroke="#12397a" stroke-width="1.1" stroke-opacity="0.9"/>
<path d="M1541.0,412.2 C1535.4,405.8 1517.6,382.6 1507.4,373.7 C1497.2,364.8 1492.9,365.0 1480.0,358.8 C1467.1,352.5 1446.2,342.4 1430.0,336.0 C1413.8,329.6 1396.0,323.2 1383.0,320.5 C1370.0,317.8 1364.9,319.2 1351.9,319.7 C1338.9,320.2 1312.8,323.0 1305.0,323.6" fill="none" stroke="#12397a" stroke-width="1.1" stroke-opacity="0.9"/>
<path d="M1190.0,349.0 C1200.2,346.5 1240.8,336.5 1251.0,334.0" fill="none" stroke="#12397a" stroke-width="1.1" stroke-opacity="0.9"/>
<path d="M1268.8,380.0 C1275.0,384.2 1294.1,396.0 1306.0,405.0 C1317.9,414.0 1328.8,422.5 1340.0,434.0 C1351.2,445.5 1364.8,458.4 1373.5,474.0 C1382.2,489.6 1390.9,512.0 1392.0,527.7 C1393.1,543.4 1388.7,556.3 1380.0,568.0 C1371.3,579.7 1350.2,592.4 1340.0,598.0 C1329.8,603.6 1322.1,600.8 1318.5,601.4" fill="none" stroke="#12397a" stroke-width="1.1" stroke-opacity="0.9"/>
<path d="M1079.6,452.5 C1081.5,455.4 1086.9,458.9 1091.0,470.0 C1095.1,481.1 1101.3,505.5 1104.0,518.8 C1106.7,532.1 1106.6,536.2 1107.4,549.7 C1108.2,563.2 1110.1,588.1 1109.0,600.0 C1107.9,611.9 1102.2,617.8 1100.9,621.3" fill="none" stroke="#12397a" stroke-width="1.1" stroke-opacity="0.9"/>
<path d="M1142.0,433.5 C1147.1,439.6 1166.1,454.4 1172.5,470.0 C1178.9,485.6 1179.2,509.4 1180.6,527.0 C1181.9,544.6 1182.5,563.6 1180.6,575.8 C1178.7,588.0 1170.9,596.0 1169.0,600.0" fill="none" stroke="#12397a" stroke-width="1.1" stroke-opacity="0.9"/>
<path d="M1216.5,405.0 C1218.2,409.2 1220.7,418.4 1226.5,430.0 C1232.3,441.6 1246.5,460.0 1251.3,474.5 C1256.0,489.0 1255.0,501.6 1255.0,517.0 C1255.0,532.4 1254.0,555.4 1251.3,566.6 C1248.6,577.8 1241.0,581.1 1239.0,584.0" fill="none" stroke="#12397a" stroke-width="1.1" stroke-opacity="0.9"/>
<path d="M1106.7,548.0 C1102.5,550.1 1088.7,554.5 1081.7,560.8 C1074.8,567.1 1069.3,576.4 1065.0,585.8 C1060.7,595.2 1057.6,607.1 1055.8,617.0 C1054.0,626.9 1054.3,640.3 1054.0,645.0" fill="none" stroke="#12397a" stroke-width="1.1" stroke-opacity="0.9"/>
<path d="M1233.8,584.8 C1237.6,583.9 1247.3,579.1 1256.7,579.6 C1266.1,580.1 1278.2,584.5 1290.0,588.0 C1301.8,591.5 1315.8,596.6 1327.5,600.4 C1339.2,604.2 1354.6,609.2 1360.0,611.0" fill="none" stroke="#12397a" stroke-width="1.1" stroke-opacity="0.9"/>
</g>
</svg>
<!--VIEWCUBE-->
<!-- ===== view cube ===== -->
<svg class="a" style="left:1760px;top:110px" width="160" height="130" viewBox="1760 110 160 130">
<defs>
<linearGradient id="gCubeL" x1="0" y1="0" x2="1" y2="1"><stop offset="0" stop-color="#e6e6e6"/><stop offset="1" stop-color="#d2d2d2"/></linearGradient>
<linearGradient id="gCubeR" x1="0" y1="0" x2="1" y2="1"><stop offset="0" stop-color="#d8d8d8"/><stop offset="1" stop-color="#cecece"/></linearGradient>
<filter id="bl05"><feGaussianBlur stdDeviation="0.5"/></filter>
</defs>
<g filter="url(#bl05)">
<path d="M1797 146 L1834.6 152.3 L1839.6 219.5 L1802.3 200.8 Z" fill="url(#gCubeL)" stroke="#8a8a8a" stroke-width="0.8" stroke-dasharray="3 2"/>
<path d="M1834.6 152.3 L1882 143 L1883.8 199.5 L1839.6 219.5 Z" fill="url(#gCubeR)" stroke="#8a8a8a" stroke-width="0.8" stroke-dasharray="3 2"/>
<path d="M1797 146 L1834.6 138.6 L1882 143 L1834.6 152.3 Z" fill="#e8e8e8" stroke="#8a8a8a" stroke-width="0.8" stroke-dasharray="3 2"/>
<text x="0" y="0" font-family="Liberation Sans" font-size="12" font-style="italic" fill="#808080" text-anchor="middle" dominant-baseline="central" transform="translate(1816.5,179) rotate(-86) scale(1.05,0.95)">LEFT</text>
<text x="0" y="0" font-family="Liberation Sans" font-size="12" font-weight="bold" fill="#7a7e82" text-anchor="middle" dominant-baseline="central" transform="matrix(-0.80,0.45,0,-1.3,1859.5,178.5)">BOTTOM</text>
<path d="M1834.6 143 L1839.6 219.5" stroke="#4848e8" stroke-width="1.6"/>
<path d="M1839.6 219.5 L1889.4 198.3" stroke="#f06a6a" stroke-width="1.6"/>
<path d="M1839.6 219.5 L1797.3 201.4" stroke="#7ae07a" stroke-width="1.6"/>
<text x="1827" y="137" font-family="Liberation Sans" font-size="18" font-weight="bold" fill="#7a80f4">Z</text>
<text x="1889.5" y="202.5" font-family="Liberation Sans" font-size="17" font-weight="bold" fill="#f08282">X</text>
<text x="1787.5" y="205.5" font-family="Liberation Sans" font-size="17" font-weight="bold" fill="#82e882">Y</text>
</g>
</svg>
<!-- ===== comments ===== -->
<div class="a" style="left:5px;top:1006px;width:375px;height:31px;background:#d4d4d4;border:1px solid #b0b0b0"></div>
<div class="t" style="left:39px;top:1014px;font-size:13.5px;color:#6a6a6a;transform:scaleX(0.945);transform-origin:0 0">COMMENTS</div>
<svg class="a" style="left:352px;top:1014px" width="28" height="16" viewBox="0 0 28 16">
<circle cx="7" cy="7.5" r="5.5" fill="#2a2a2a"/><path d="M4 7.5 H10 M7 4.5 V10.5" stroke="#fff" stroke-width="1.8"/>
<path d="M22.5 2 V14 M24.5 2 V14" stroke="#8a8a8a" stroke-width="1"/>
</svg>
<!-- ===== nav bar ===== -->
<div class="a" style="left:806px;top:1008px;width:181px;height:30px;background:#c9c9c9"></div>
<div class="a" style="left:995px;top:1008px;width:117px;height:30px;background:#c9c9c9"></div>
<svg class="a" style="left:800px;top:1005px" width="320" height="36" viewBox="800 1005 320 36">
<!-- orbit -->
<ellipse cx="819.5" cy="1022" rx="4" ry="10" fill="none" stroke="#505050" stroke-width="1.2"/>
<path d="M813 1017.5 Q809.5 1022 813 1026.5" fill="none" stroke="#505050" stroke-width="1.2"/>
<path d="M819.5 1026 Q829.5 1026 829.5 1022 Q829.5 1019.5 826 1018" fill="none" stroke="#505050" stroke-width="1.2"/>
<path d="M824 1015.5 L827.5 1018.5 L823.5 1020 Z" fill="#404040"/>
<path d="M822 1015 L822.6 1017 L824.5 1017.5 L822.6 1018 L822 1020 L821.4 1018 L819.5 1017.5 L821.4 1017 Z" fill="#404040"/>
<path d="M819 1019.5 L819.9 1021.6 L822 1022.3 L819.9 1023 L819 1025 L818.1 1023 L816 1022.3 L818.1 1021.6 Z" fill="#2e8ae8"/>
<path d="M836 1020 H843 L839.5 1025 Z" fill="#3a3a3a"/>
<!-- look at -->
<rect x="851.5" y="1017" width="19" height="14" fill="#d8d8d8" stroke="#505050" stroke-width="1.3"/>
<rect x="855" y="1021" width="12" height="6" fill="#8a8e96"/>
<path d="M853 1017 L856 1012 L866 1014 L869 1017" fill="none" stroke="#505050" stroke-width="1.1"/>
<!-- pan hand -->
<g transform="translate(886,1014) scale(0.9) translate(-886,-1010)"><path d="M886 1022 Q884 1019 887 1019 L891 1024 V1013 Q891 1011 893 1011 Q895 1011 895 1013 V1021 V1011 Q895 1009 897 1009 Q899 1009 899 1011 V1021 V1012 Q899 1010 901 1010 Q903 1010 903 1012 V1021 V1015 Q903 1013 905 1013 Q907 1013 907 1015 V1025 Q907 1033 899 1033 H896 Q892 1033 889 1028 Z" fill="#f4f4f4" stroke="#505050" stroke-width="1.2"/></g>
<!-- zoom -->
<circle cx="923" cy="1022" r="6" fill="#dfe8ee" stroke="#505050" stroke-width="1.4"/>
<path d="M927 1026 L932 1031" stroke="#2a2a2a" stroke-width="2.6"/>
<path d="M930.5 1016 H936 M933.2 1013.5 V1018.5 M930.5 1021 H936" stroke="#404040" stroke-width="1.1"/>
<!-- fit -->
<rect x="949" y="1014" width="18" height="18" fill="none" stroke="#6a6a6a" stroke-width="1" stroke-dasharray="2 2"/>
<circle cx="957" cy="1021" r="7" fill="#dfe8ee" stroke="#505050" stroke-width="1.4"/>
<path d="M962 1026 L967 1031" stroke="#2a2a2a" stroke-width="2.6"/>
<path d="M975 1020 H983 L979 1025 Z" fill="#3a3a3a"/>
<!-- display -->
<rect x="1000" y="1013" width="19" height="15" rx="1" fill="#a8c4e8" stroke="#505050" stroke-width="1.4"/>
<path d="M1006 1032 H1014 L1012 1028 H1008 Z" fill="#d8d8d8" stroke="#505050" stroke-width="1"/>
<path d="M1025 1020 H1031 L1028 1024 Z" fill="#3a3a3a"/>
<!-- grid -->
<rect x="1039" y="1013" width="19" height="19" fill="#d0d0d0" stroke="#505050" stroke-width="1.2"/>
<path d="M1042.8 1013 V1032 M1046.6 1013 V1032 M1050.4 1013 V1032 M1054.2 1013 V1032 M1039 1016.8 H1058 M1039 1020.6 H1058 M1039 1024.4 H1058 M1039 1028.2 H1058" stroke="#6a6a6a" stroke-width="1"/>
<path d="M1063 1020 H1069 L1066 1024 Z" fill="#3a3a3a"/>
<!-- viewports -->
<rect x="1077" y="1014" width="19" height="17" fill="#a8c4e8" stroke="#3a5a9a" stroke-width="1.4"/>
<path d="M1086.5 1014 V1031 M1077 1022.5 H1096" stroke="#3a5a9a" stroke-width="1.4"/>
<path d="M1101 1020 H1107 L1104 1024 Z" fill="#3a3a3a"/>
</svg>
<div class="t" style="left:1831px;top:1016px;font-size:14px;font-weight:bold;color:#4a4a4a">Body2</div>
<div class="a" style="left:0;top:1041px;width:1920px;height:1px;background:#f8f8f8"></div>
<div class="a" style="left:0;top:1042px;width:1920px;height:3px;background:#050505"></div>
<div class="a" style="left:553px;top:1042px;width:45px;height:3px;background:#3c3c3c"></div>
<div class="a" style="left:1868px;top:1042px;width:1px;height:3px;background:#aaa"></div>
<!-- cursor -->
<svg class="a" style="left:330px;top:496px" width="16" height="24" viewBox="0 0 16 24">
<path d="M3.5 3 V17 L7 13.8 L9.8 20.5 L12.2 19.5 L9.4 13 H14 Z" fill="#000" stroke="#fff" stroke-width="1.3" stroke-linejoin="round"/>
</svg>

</body></html>
